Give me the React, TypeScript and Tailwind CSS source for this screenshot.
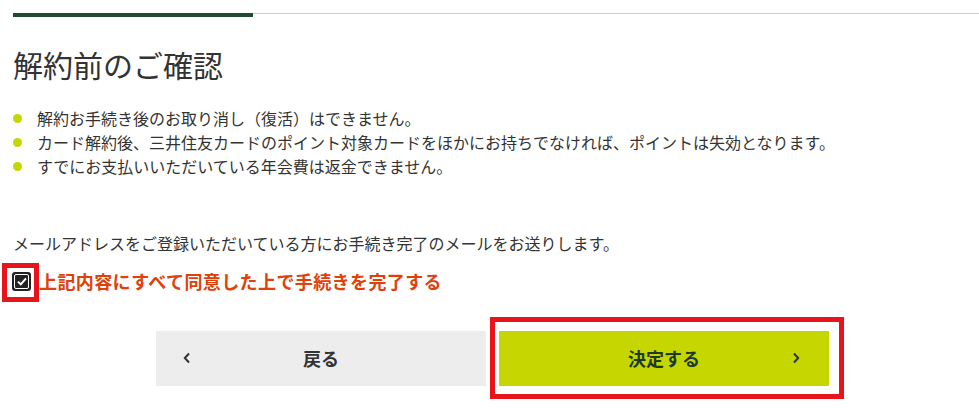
const font = { fontFamily: '"Noto Sans CJK JP", "Noto Sans", sans-serif' };

const notes = [
  '解約お手続き後のお取り消し（復活）はできません。',
  'カード解約後、三井住友カードのポイント対象カードをほかにお持ちでなければ、ポイントは失効となります。',
  'すでにお支払いいただいている年会費は返金できません。',
];

function Chevron({ dir }: { dir: 'left' | 'right' }) {
  return (
    <svg width="8" height="12" viewBox="0 0 8 12" fill="none">
      <path
        d={dir === 'left' ? 'M6 1.5L1.8 6L6 10.5' : 'M2 1.5L6.2 6L2 10.5'}
        stroke="currentColor"
        strokeWidth="2"
      />
    </svg>
  );
}

export default function App() {
  return (
    <div className="w-[979px] h-[411px] bg-white text-[#333] overflow-hidden" style={font}>
      {/* progress line */}
      <div className="flex items-start mt-[13px] ml-[13px]">
        <div className="w-[240px] h-[4px] bg-[#1f4b33]" />
        <div className="flex-1 h-px bg-[#cccccc]" />
      </div>

      <div className="pl-[12px]">
        <h1 className="mt-[27px] ml-px text-[30px] leading-[40px] font-normal">解約前のご確認</h1>

        <ul className="mt-[22px] ml-px">
          {notes.map((n) => (
            <li key={n} className="flex items-center text-[16px] leading-[24px]">
              <span className="w-[9px] h-[9px] rounded-full bg-[#c5d600] mr-[15px]" />
              {n}
            </li>
          ))}
        </ul>

        <p className="mt-[53px] ml-px text-[16px] leading-[24px]">
          メールアドレスをご登録いただいている方にお手続き完了のメールをお送りします。
        </p>

        {/* agree */}
        <div className="mt-[11px] h-[30px] flex items-center">
          <div className="relative w-[19px] h-[19px] rounded-[3px] bg-[#222] p-[2px]">
            <div className="w-full h-full rounded-[2px] border border-white flex items-center justify-center">
              <svg width="10" height="9" viewBox="0 0 10 9" fill="none">
                <path d="M1 4.6L3.8 7.4L9 1.4" stroke="white" strokeWidth="2" />
              </svg>
            </div>
            <div className="absolute left-[-10px] top-[-9px] w-[37px] h-[39px] border-[5px] border-[#e8141c]" />
          </div>
          <span className="ml-[8px] text-[18px] tracking-[0.4px] font-bold text-[#e0400a]">
            上記内容にすべて同意した上で手続きを完了する
          </span>
        </div>
      </div>

      {/* buttons */}
      <div className="mt-[35px] pl-[156px] flex gap-[13px]">
        <button className="relative w-[330px] h-[55px] bg-[#ededed] flex items-center justify-center text-[18px] font-bold text-[#333]">
          <span className="absolute left-[27px] top-[21px]">
            <Chevron dir="left" />
          </span>
          戻る
        </button>
        <div className="relative">
          <button className="relative w-[330px] h-[55px] bg-[#c5d600] flex items-center justify-center text-[18px] font-bold text-[#1c3a26]">
            決定する
            <span className="absolute right-[29px] top-[21px] text-[#333]">
              <Chevron dir="right" />
            </span>
          </button>
          <div className="absolute left-[-9px] top-[-14px] w-[354px] h-[82px] border-[5px] border-[#e8141c]" />
        </div>
      </div>
    </div>
  );
}
